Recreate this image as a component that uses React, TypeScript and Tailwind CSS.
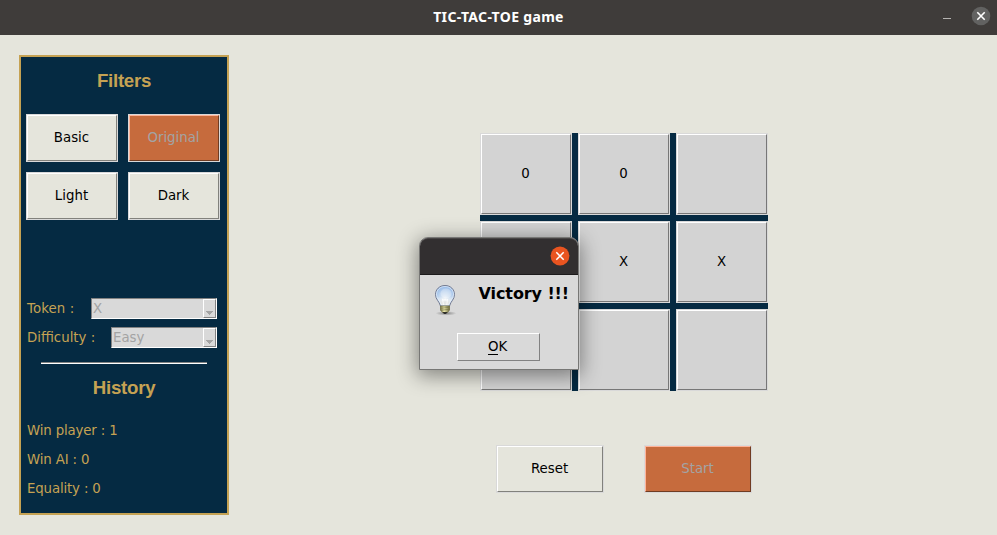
import React from 'react';

type ButtonProps = { label: string; active?: boolean; size: string };

function TkButton({ label, active, size }: ButtonProps) {
  const tone = active
    ? 'bg-[#c66b3d] text-[#a3a3a3] border-t-[#ffb499] border-l-[#ffb499] border-r-[#703c22] border-b-[#703c22]'
    : 'bg-[#e5e5dc] text-black border-t-white border-l-white border-r-[#81817c] border-b-[#81817c]';
  return (
    <div className={`${size} shrink-0 border border-[#d9d9d9]`}>
      <button className={`block h-full w-full border pr-[1px] text-center leading-[18px] ${tone}`}>{label}</button>
    </div>
  );
}

function Cell({ value }: { value: string }) {
  return (
    <div className="h-[82px] w-[92px] border border-[#d9d9d9]">
      <button className="block h-full w-full border border-t-white border-l-white border-r-[#777777] border-b-[#777777] bg-[#d3d3d3] pr-[1px] text-center leading-[18px] text-black">
        {value}
      </button>
    </div>
  );
}

function Combo({ value, width }: { value: string; width: string }) {
  return (
    <div className={`flex h-[21px] ${width} border border-t-[#828282] border-l-[#828282] border-r-white border-b-white bg-[#d9d9d9]`}>
      <span className="flex-1 pl-[1px] leading-[20px] text-[#a3a3a3]">{value}</span>
      <span className="flex h-[19px] w-[13px] items-end justify-center border border-t-white border-l-white border-r-[#828282] border-b-[#828282] pb-[2px]">
        <svg width="7" height="4" viewBox="0 0 7 4" shapeRendering="crispEdges">
          <path d="M0 0H7V1H6V2H5V3H4V4H3V3H2V2H1V1H0Z" fill="#a3a3a3" />
        </svg>
      </span>
    </div>
  );
}

function Bulb() {
  return (
    <svg width="32" height="32" viewBox="0 0 32 32">
      <defs>
        <radialGradient id="glass" cx="0.5" cy="0.65" r="0.65">
          <stop offset="0" stopColor="#eef3f8" />
          <stop offset="0.5" stopColor="#c3d8f0" />
          <stop offset="1" stopColor="#8db4e6" />
        </radialGradient>
        <linearGradient id="neck" x1="0" y1="0" x2="0" y2="1">
          <stop offset="0.55" stopColor="#fff" stopOpacity="0" />
          <stop offset="0.85" stopColor="#e6e6e4" stopOpacity="0.9" />
        </linearGradient>
        <linearGradient id="brass" x1="0" y1="0" x2="1" y2="0">
          <stop offset="0" stopColor="#777344" />
          <stop offset="0.4" stopColor="#f2efb1" />
          <stop offset="1" stopColor="#6b683b" />
        </linearGradient>
        <radialGradient id="ground">
          <stop offset="0" stopColor="#555" stopOpacity="0.65" />
          <stop offset="1" stopColor="#555" stopOpacity="0" />
        </radialGradient>
      </defs>
      <ellipse cx="17" cy="29.3" rx="10.5" ry="2.3" fill="url(#ground)" />
      <path d="M16 1.5C10.4 1.5 6.5 5.5 6.5 10.5C6.5 15.5 10.2 17 11.5 22H20.5C21.8 17 25.5 15.5 25.5 10.5C25.5 5.5 21.6 1.5 16 1.5Z" fill="url(#glass)" stroke="#757c92" />
      <path d="M16 2.5C11 2.5 7.5 6 7.5 10.5C7.5 15 11.2 16.5 12.3 21H19.7C20.8 16.5 24.5 15 24.5 10.5C24.5 6 21 2.5 16 2.5Z" fill="url(#neck)" stroke="#f5f8fc" strokeOpacity="0.6" />
      <ellipse cx="17" cy="9.5" rx="5.5" ry="5" fill="#fff" fillOpacity="0.25" />
      <path d="M14.5 21L13.5 15L15.2 16.5L16 15L17 16.5L18.5 15L17.8 21" fill="none" stroke="#fff" strokeWidth="0.8" />
      <path d="M11.5 22H20.5V26L18.5 28.5H13.5L11.5 26Z" fill="url(#brass)" stroke="#6d6a3e" strokeWidth="0.7" />
      <path d="M11.5 24.3L20.5 23.3M11.5 26.3L20.5 25.3" stroke="#77744a" strokeWidth="0.7" />
      <path d="M13.5 28H18.5L17 30H15Z" fill="#2f2f2a" />
    </svg>
  );
}

function Dialog() {
  return (
    <div className="absolute top-[237px] left-[419px] h-[133px] w-[160px] rounded-t-[9px] border border-[#777775] bg-[#d9d9d9] shadow-[0_4px_20px_2px_rgba(0,0,0,0.42)]">
      <div className="flex h-[37px] items-center justify-end rounded-t-[8px] border-t border-b border-t-[#484545] border-b-[#1c1a1b] bg-[#322f30] pr-[8px] pb-[1px]">
        <svg width="20" height="20" viewBox="0 0 20 20">
          <circle cx="10" cy="10" r="9.4" fill="#e95420" />
          <path d="M6.3 6.3L13.7 13.7M13.7 6.3L6.3 13.7" stroke="#fff" strokeWidth="1.5" />
        </svg>
      </div>
      <div className="flex justify-between pt-[9px] pr-[9px] pl-[9px]">
        <Bulb />
        <p className="text-[16px] leading-[20px] font-bold tracking-[-0.1px] whitespace-nowrap text-black">Victory !!!</p>
      </div>
      <button className="mt-[17px] ml-[37px] block h-[28px] w-[83px] border border-t-white border-l-white border-r-[#828282] border-b-[#828282] pr-[2px] text-center leading-[24px] text-black">
        <span className="inline-block h-[16px] border-b border-black leading-[16px]">O</span>K
      </button>
    </div>
  );
}

const board = ['0', '0', '', '', 'X', 'X', '', '', ''];

export default function App() {
  return (
    <div className="relative h-[535px] w-[997px] overflow-hidden bg-[#e5e5dc] font-['DejaVu_Sans',sans-serif] text-[13.33px]">
      <header className="flex h-[35px] items-center bg-[#3f3c3a] pb-[3px] text-white">
        <div className="w-[100px]" />
        <h1 className="flex-1 text-center font-['Noto_Sans',sans-serif] text-[14px] font-bold tracking-[0.32px]">TIC-TAC-TOE game</h1>
        <div className="flex w-[100px] items-center justify-end gap-[20px] pr-[6px]">
          <span className="mt-[5px] h-[1px] w-[8px] bg-[#b5b3b1]" />
          <svg width="20" height="20" viewBox="0 0 20 20">
            <circle cx="10" cy="10" r="9.3" fill="#626261" />
            <path d="M6.3 6.3L13.7 13.7M13.7 6.3L6.3 13.7" stroke="#fff" strokeWidth="1.6" />
          </svg>
        </div>
      </header>
      <main className="flex pt-[20px] pl-[19px]">
        <aside className="h-[460px] w-[210px] border-2 border-[#c5a253] bg-[#052a42] text-[#c5a253]">
          <h2 className="pt-[13px] text-center font-['Liberation_Sans',sans-serif] text-[18.67px] leading-[22px] font-bold tracking-[-0.25px]">Filters</h2>
          <div className="mt-[22px] grid grid-cols-[92px_92px] gap-[10px] pl-[5px]">
            <TkButton label="Basic" size="h-[48px]" />
            <TkButton label="Original" active size="h-[48px]" />
            <TkButton label="Light" size="h-[48px]" />
            <TkButton label="Dark" size="h-[48px]" />
          </div>
          <div className="mt-[78px] flex h-[21px] justify-between pr-[10px] pl-[6px]">
            <span className="leading-[22px] tracking-[0.1px]">Token :</span>
            <Combo value="X" width="w-[126px]" />
          </div>
          <div className="mt-[8px] flex h-[21px] justify-between pr-[10px] pl-[6px]">
            <span className="leading-[22px]">Difficulty :</span>
            <Combo value="Easy" width="w-[106px]" />
          </div>
          <div className="mt-[14px] ml-[20px] h-[2px] w-[166px] border-t border-b border-t-[#828282] border-b-white" />
          <h2 className="mt-[13px] text-center font-['Liberation_Sans',sans-serif] text-[18.67px] leading-[22px] font-bold tracking-[-0.25px]">History</h2>
          <ul className="mt-[17px] pl-[6px] leading-[29px] tracking-[-0.15px]">
            <li>Win player : 1</li>
            <li>Win AI : 0</li>
            <li>Equality : 0</li>
          </ul>
        </aside>
        <section className="ml-[251px] flex flex-col pt-[78px]">
          <div className="grid w-[288px] grid-cols-3 gap-[6px] bg-[#052a42]">
            {board.map((v, i) => (
              <Cell key={i} value={v} />
            ))}
          </div>
          <div className="mt-[54px] ml-[16px] flex gap-[40px]">
            <TkButton label="Reset" size="h-[48px] w-[108px]" />
            <TkButton label="Start" active size="h-[48px] w-[108px]" />
          </div>
        </section>
      </main>
      <Dialog />
    </div>
  );
}
